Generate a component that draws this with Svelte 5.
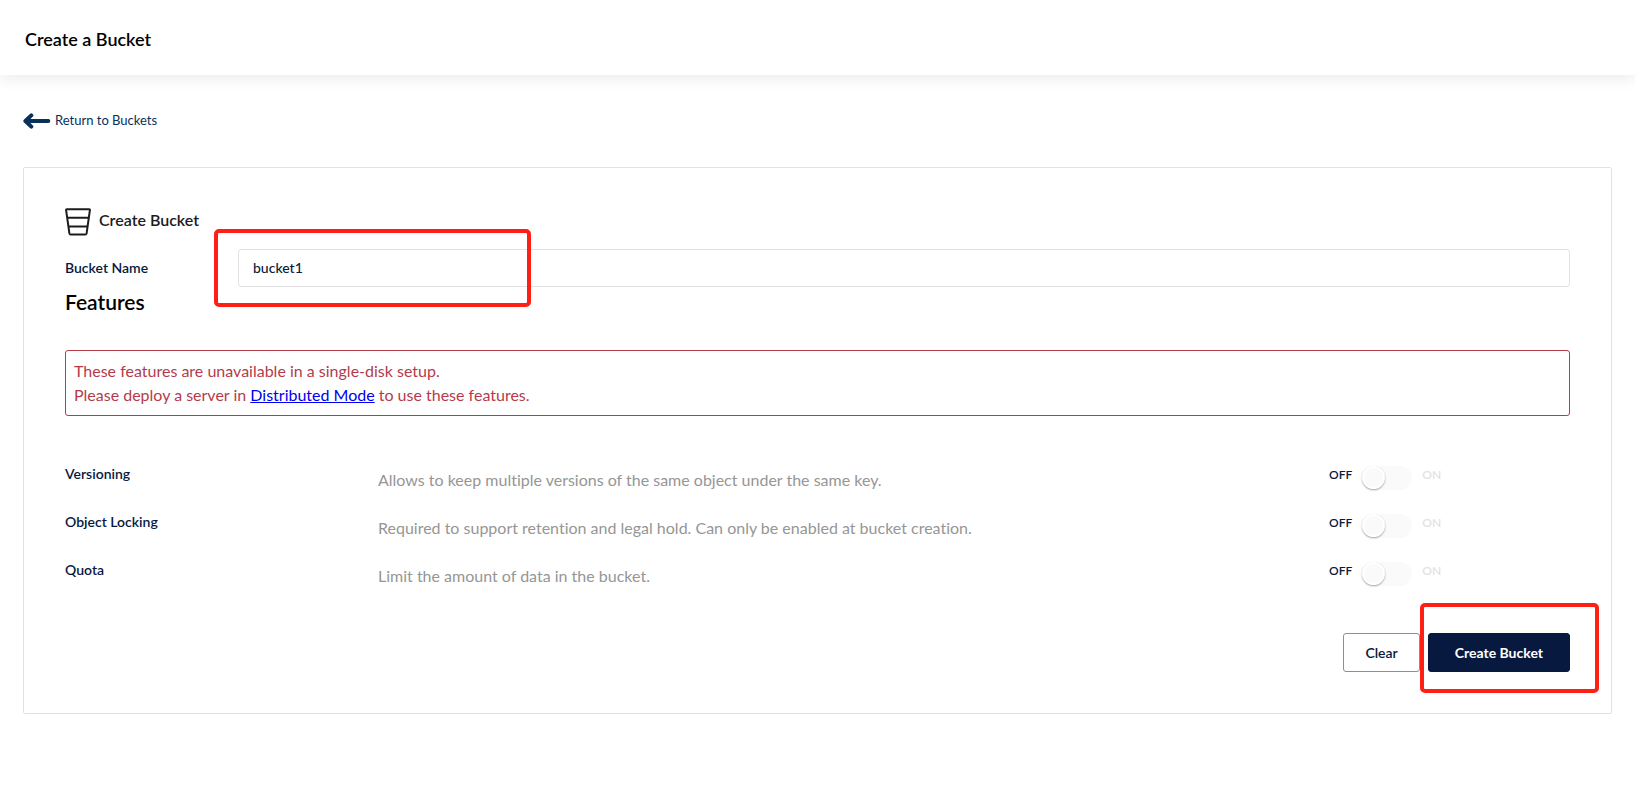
<script lang="ts">
  type Feature = { id: string; label: string; description: string }

  const features: Feature[] = [
    {
      id: "versioning",
      label: "Versioning",
      description: "Allows to keep multiple versions of the same object under the same key.",
    },
    {
      id: "locking",
      label: "Object Locking",
      description:
        "Required to support retention and legal hold. Can only be enabled at bucket creation.",
    },
    {
      id: "quota",
      label: "Quota",
      description: "Limit the amount of data in the bucket.",
    },
  ]

  let bucketName = $state("bucket1")
</script>

<header>
  <h1>Create a Bucket</h1>
</header>

<main>
  <a class="back" href="#buckets">
    <svg width="28" height="18" viewBox="0 -2 28 18" aria-hidden="true">
      <path d="M8.3 2.4 2.4 8l5.9 5.6M3 8h22.3" />
    </svg>
    Return to Buckets
  </a>

  <form class="panel" onsubmit={(e) => e.preventDefault()}>
    <h2>
      <svg width="26" height="28" viewBox="0 0 26 28" aria-hidden="true">
        <path d="M1.9 1.2h22.2q1 0 .8 1L21.6 25.4q-.2 1.2-1.3 1.2H5.7q-1.1 0-1.3-1.2L1.1 2.2q-.1-1 .8-1ZM2.2 9.8h21.6M3.5 18.6h19" />
      </svg>
      <span>Create Bucket</span>
    </h2>

    <div class="name-row">
      <label for="bucket-name">Bucket Name</label>
      <div class="field">
        <input id="bucket-name" type="text" bind:value={bucketName} />
        <span class="mark mark-name"></span>
      </div>
    </div>

    <h3>Features</h3>

    <p class="notice">
      These features are unavailable in a single-disk setup.<br />
      Please deploy a server in <a href="#distributed">Distributed Mode</a> to use these features.
    </p>

    <div class="features">
      {#each features as feature (feature.id)}
        <div class="feature">
          <label for={feature.id}>{feature.label}</label>
          <p>{feature.description}</p>
          <div class="toggle">
            <span>OFF</span>
            <input id={feature.id} type="checkbox" role="switch" disabled />
            <span class="on">ON</span>
          </div>
        </div>
      {/each}
    </div>

    <div class="actions">
      <button type="button" class="clear" onclick={() => (bucketName = "")}>Clear</button>
      <div class="submit">
        <button type="submit" class="primary">Create Bucket</button>
        <span class="mark mark-submit"></span>
      </div>
    </div>
  </form>
</main>

<style>
  :global(body) {
    background: #fff;
    color: #000;
    font-family: Lato, sans-serif;
    font-size: 16px;
    font-variant-ligatures: none;
  }

  h1,
  h2,
  h3,
  p {
    margin: 0;
  }

  header {
    padding: 26px 25px 23px;
    box-shadow: 0 4px 14px rgba(0, 0, 0, 0.08);
  }

  h1 {
    font-size: 18px;
    font-weight: 600;
    line-height: 26px;
  }

  main {
    padding: 35px 23px 0;
  }

  .back {
    display: flex;
    align-items: center;
    gap: 4px;
    width: fit-content;
    color: #07305a;
    font-size: 13px;
    font-weight: 400;
    line-height: 20px;
    text-decoration: none;
  }

  .back path {
    fill: none;
    stroke: #07305a;
    stroke-width: 4;
    stroke-linecap: round;
    stroke-linejoin: round;
  }

  .panel {
    margin-top: 37px;
    padding: 40px 41px 41px;
    border: 1px solid #e2e2e2;
    border-radius: 2px;
  }

  h2 {
    display: flex;
    align-items: flex-start;
    gap: 8px;
    color: #1c1c1c;
    font-size: 16px;
    font-weight: 600;
    line-height: 24px;
  }

  h2 path {
    fill: none;
    stroke: #1c1c1c;
    stroke-width: 2;
    stroke-linejoin: round;
  }

  label {
    color: #07193e;
    font-size: 14px;
    font-weight: 600;
    line-height: 20px;
  }

  .name-row {
    display: flex;
    align-items: center;
    margin-top: 13px;
  }

  .name-row label {
    width: 173px;
  }

  .field {
    position: relative;
    flex: 1;
  }

  .field input {
    box-sizing: border-box;
    display: block;
    width: 100%;
    height: 38px;
    padding: 0 14px 2px;
    border: 1px solid #e2e2e2;
    border-radius: 3px;
    background: #fff;
    color: #07193e;
    font: 500 14px Lato, sans-serif;
    outline: none;
  }

  .mark {
    position: absolute;
    box-sizing: border-box;
    border: 4px solid #ff2015;
    border-radius: 5px;
    pointer-events: none;
  }

  .mark-name {
    top: -20px;
    left: -24px;
    width: 317px;
    height: 78px;
  }

  .mark-submit {
    inset: -30px -29px -21px -8px;
  }

  h3 {
    margin-top: 2px;
    font-size: 21px;
    font-weight: 600;
    line-height: 26px;
  }

  .notice {
    margin-top: 35px;
    padding: 8px;
    border: 1px solid #b53b4b;
    border-radius: 3px;
    color: #b53b4b;
    line-height: 24px;
  }

  .notice a {
    color: #0000ee;
  }

  .features {
    margin-top: 48px;
  }

  .feature {
    display: grid;
    grid-template-columns: 313fr 951fr 241fr;
    height: 48px;
  }

  .feature p {
    padding-top: 4px;
    color: #969696;
    line-height: 24px;
  }

  .toggle {
    display: flex;
    align-items: flex-start;
    gap: 10px;
    color: #07193e;
    font-size: 12px;
    font-weight: 600;
    line-height: 22px;
  }

  .toggle .on {
    color: #e2e2e2;
  }

  .toggle input {
    appearance: none;
    width: 50px;
    height: 24px;
    margin: 2px 0 0;
    border-radius: 12px;
    background: #fafafa;
  }

  .toggle input::before {
    content: "";
    display: block;
    box-sizing: border-box;
    width: 23px;
    height: 23px;
    border: 2px solid #fff;
    border-radius: 50%;
    background: #fafafa;
    box-shadow: 0 1px 2px rgba(0, 0, 0, 0.35);
  }

  .actions {
    display: flex;
    justify-content: flex-end;
    gap: 8px;
    margin-top: 25px;
  }

  .submit {
    position: relative;
  }

  button {
    display: block;
    height: 39px;
    border: 1px solid #8490a3;
    border-radius: 3px;
    background: #fff;
    color: #07193e;
    font: 600 14px Lato, sans-serif;
    cursor: pointer;
  }

  .clear {
    padding: 0 21px;
  }

  .primary {
    padding: 0 26px;
    border-color: #07193e;
    background: #07193e;
    color: #fff;
    font-weight: 700;
  }
</style>
